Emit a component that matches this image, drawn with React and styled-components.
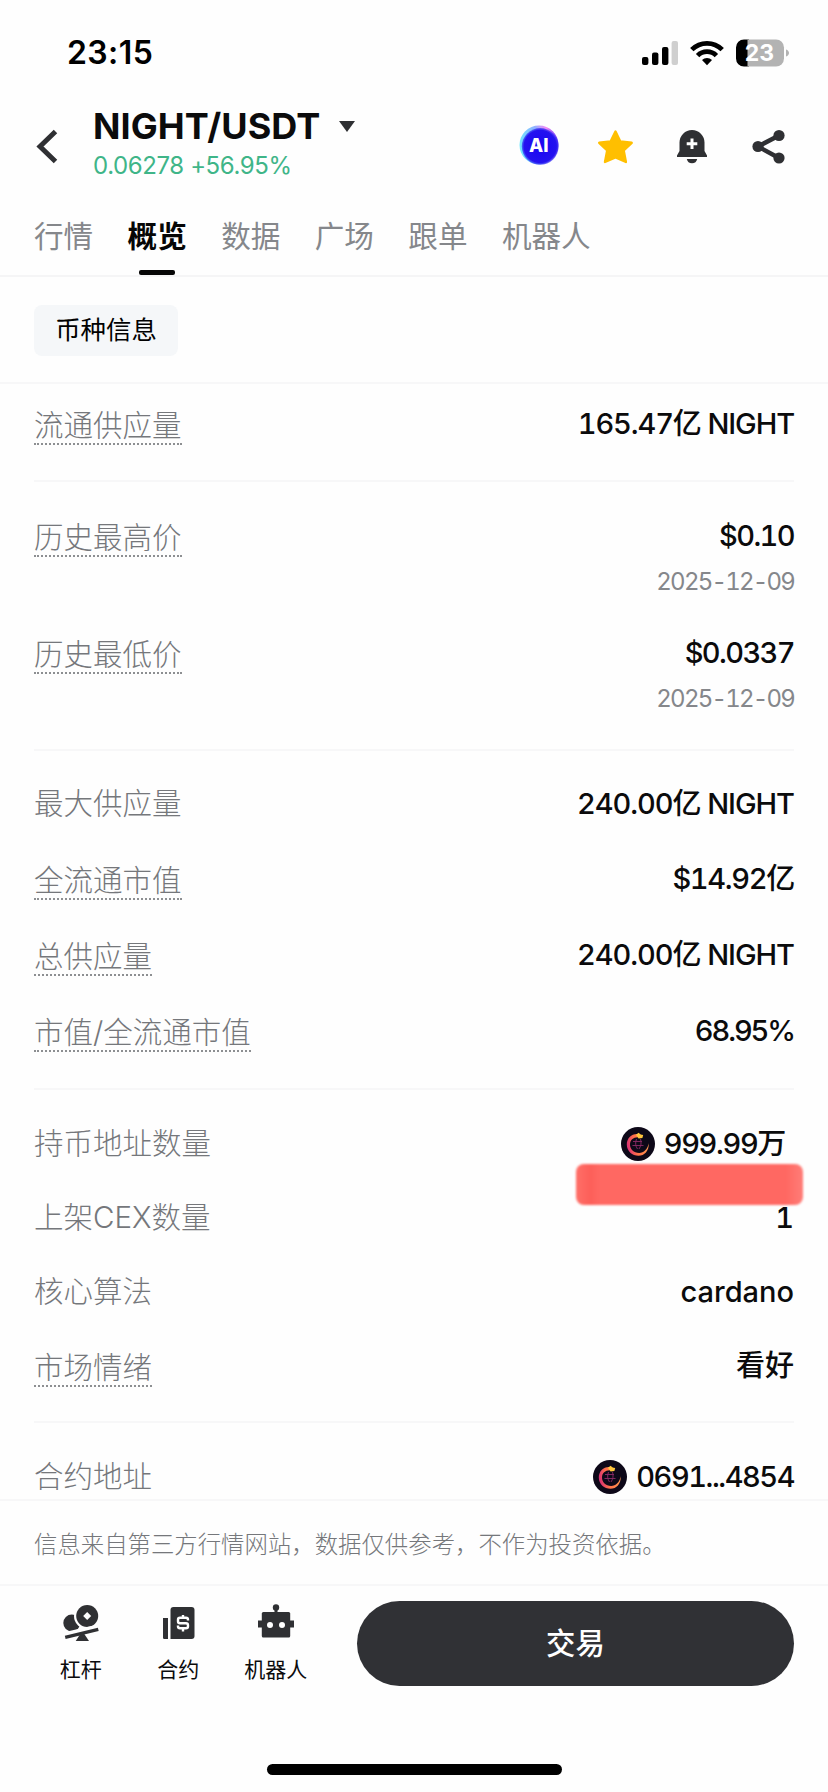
import React from 'react'
import styled, { createGlobalStyle } from 'styled-components'

const GlobalStyle = createGlobalStyle`
  * {
    box-sizing: border-box;
  }
  body {
    margin: 0;
    background: #fefefe;
    color: #0b0b0c;
    font-family: Inter, "Noto Sans CJK SC", sans-serif;
  }
  svg {
    display: block;
  }
`

const Screen = styled.div`
  width: 828px;
  height: 1792px;
  display: flex;
  flex-direction: column;
  overflow: hidden;
`

const StatusBar = styled.div`
  display: flex;
  justify-content: space-between;
  height: 104px;
  padding: 33px 38px 0 67px;
`

const Time = styled.span`
  font-size: 32px;
  line-height: 39px;
  font-weight: 600;
  letter-spacing: 0.4px;
  color: #000;
`

const StatusIcons = styled.div`
  display: flex;
  align-items: center;
  gap: 12px;
  height: 40px;
`

const Header = styled.header`
  display: flex;
  height: 84px;
  padding: 0 40px 0 34px;
`

const BackButton = styled.div`
  padding-top: 24px;
  width: 59px;
`

const Pair = styled.div`
  flex: 1;
`

const PairName = styled.div`
  display: flex;
  align-items: center;
  font-size: 36px;
  line-height: 45px;
  font-weight: 700;
  letter-spacing: 0.1px;

  svg {
    margin-left: 19px;
  }
`

const Price = styled.div`
  font-size: 24px;
  line-height: 30px;
  padding-top: 2px;
  letter-spacing: -0.4px;
  color: #3fb588;
`

const Actions = styled.div`
  display: flex;
  gap: 36.4px;
  padding-top: 21px;
`

const Tabs = styled.nav`
  display: flex;
  gap: 34.4px;
  height: 89px;
  padding: 26px 34px 0;
  border-bottom: 2px solid #f5f5f6;
`

const Tab = styled.div`
  display: flex;
  flex-direction: column;
  justify-content: space-between;
  align-items: center;
  font-size: 29.6px;
  line-height: 44px;
  font-weight: ${props => props.$active ? 700 : 400};
  color: ${props => props.$active ? '#060606' : '#85878b'};

  &::after {
    content: '';
    width: 36px;
    height: 5px;
    border-radius: 2px;
    background: ${props => props.$active ? '#060606' : 'transparent'};
  }
`

const ChipBar = styled.div`
  height: 107px;
  padding: 28px 34px 0;
  border-bottom: 2px solid #f7f7f8;
`

const Chip = styled.div`
  width: 144px;
  height: 51px;
  border-radius: 8px;
  background: #f5f7f9;
  font-size: 25.4px;
  line-height: 50px;
  font-weight: 400;
  color: #000;
  text-align: center;
`

const Section = styled.section`
  height: ${props => props.$height}px;
  margin: 0 34px;
  padding-top: ${props => props.$top}px;
  border-bottom: ${props => props.$last ? 'none' : '2px solid #f7f7f8'};
`

const Row = styled.div`
  position: relative;
  display: flex;
  justify-content: space-between;
  align-items: flex-start;
  height: ${props => props.$height}px;
`

const Label = styled.div`
  height: 38px;
  font-size: 29.5px;
  line-height: 36px;
  font-weight: 300;
  color: #75777b;
  border-bottom: ${props => props.$hint ? '2px dotted #8d8f92' : 'none'};
`

const Value = styled.div`
  display: flex;
  align-items: center;
  justify-content: flex-end;
  margin-top: ${props => props.$lift ? -2 : 0}px;
  padding-right: ${props => props.$inset || 0}px;
  font-size: 29px;
  line-height: 38px;
  font-weight: 500;
  letter-spacing: ${props => props.$tracking}px;
  font-feature-settings: "tnum";

  svg {
    margin-right: 9px;
  }
`

const DateText = styled.div`
  margin-top: 8px;
  font-size: 24px;
  line-height: 38px;
  letter-spacing: -1.8px;
  text-align: right;
  color: #85878b;
  font-feature-settings: "tnum";
`

const Marker = styled.div`
  position: absolute;
  top: 39px;
  right: -9px;
  width: 227px;
  height: 41px;
  border-radius: 8px;
  background: linear-gradient(90deg, #ff6f68 0, #fd5f59 14px, #ff6862 24px, #ff6862 210px, #ff7d78 227px);
  filter: blur(1px);
`

const Notice = styled.div`
  height: 85px;
  padding: 26px 34px 0;
  border-top: 2px solid #f7f7f8;
  font-size: 23.4px;
  line-height: 36px;
  font-weight: 300;
  color: #75777b;
`

const BottomBar = styled.footer`
  display: flex;
  flex: 1;
  padding: 15px 34px 0 32px;
  border-top: 2px solid #f7f7f8;
`

const NavItem = styled.div`
  display: flex;
  flex-direction: column;
  align-items: center;
  width: 97.5px;
  padding-top: 2px;
  font-size: 21px;
  line-height: 30px;

  svg {
    margin-bottom: 14px;
  }
`

const TradeButton = styled.div`
  width: 437px;
  height: 85px;
  margin-left: auto;
  border-radius: 43px;
  background: #303135;
  color: #fff;
  font-size: 29.4px;
  line-height: 85px;
  font-weight: 500;
  text-align: center;
`

const HomeIndicator = styled.div`
  width: 295px;
  height: 11px;
  margin: 0 auto 17px;
  border-radius: 6px;
  background: #000;
`

const Signal = () => (
  <svg width="36" height="26" viewBox="0 0 36 26">
    <rect x="0" y="17" width="6.4" height="8" rx="2" />
    <rect x="10" y="12.5" width="6.4" height="12.5" rx="2" />
    <rect x="20" y="7" width="6.4" height="18" rx="2" />
    <rect x="29.6" y="1" width="6.4" height="24" rx="2" fill="#cfcfcf" />
  </svg>
)

const Wifi = () => (
  <svg width="34" height="26" viewBox="0 0 34 26">
    <g fill="none" stroke="#000" strokeWidth="4.8">
      <path d="M1.8 9.6a21.5 21.5 0 0 1 30.4 0" />
      <path d="M7.6 15.6a13.2 13.2 0 0 1 18.8 0" />
    </g>
    <path d="M17 25.3l-5-5.2a7.2 7.2 0 0 1 10 0z" />
  </svg>
)

const Battery = () => (
  <svg width="54" height="28" viewBox="0 0 54 28">
    <path d="M8 .5h5v27H8a8 8 0 0 1-8-8v-11a8 8 0 0 1 8-8z" />
    <path d="M11.5.5H40a8 8 0 0 1 8 8v11a8 8 0 0 1-8 8H11.5z" fill="#b3b3b3" />
    <path d="M50 10.5c4 1.3 4 5.7 0 7z" fill="#b3b3b3" />
    <text x="23.5" y="22" textAnchor="middle" fontSize="23" fontWeight="700" fill="#fff">23</text>
  </svg>
)

const AiBadge = () => (
  <svg width="40" height="40" viewBox="0 0 40 40">
    <defs>
      <linearGradient id="aiRim" x1="0" y1="0.5" x2="1" y2="0.3">
        <stop offset="0" stopColor="#6fe6ff" />
        <stop offset="0.45" stopColor="#8fb4ff" />
        <stop offset="0.75" stopColor="#f58af5" />
        <stop offset="1" stopColor="#5a30ff" />
      </linearGradient>
      <radialGradient id="aiCore" cx="0.5" cy="0.5" r="0.5">
        <stop offset="0" stopColor="#1a05f2" />
        <stop offset="0.88" stopColor="#2412f0" />
        <stop offset="1" stopColor="#2a2cf4" stopOpacity="0.6" />
      </radialGradient>
    </defs>
    <circle cx="20" cy="20" r="19.5" fill="url(#aiRim)" />
    <circle cx="21.2" cy="21.4" r="18.4" fill="url(#aiCore)" />
    <text x="19.8" y="26.8" textAnchor="middle" fontSize="18.5" fontWeight="800" fill="#fff">AI</text>
  </svg>
)

const Star = () => (
  <svg width="40" height="40" viewBox="0 0 40 40">
    <path d="M20.5 6.5l4.800 10 11.400 1.300-8 7.700 2.200 11.500-10.400-4.500L10 37l2.200-11.500-8-7.700 11.400-1.300z" fill="#ffbf00" stroke="#ffbf00" strokeWidth="2.4" strokeLinejoin="round" />
  </svg>
)

const Bell = () => (
  <svg width="40" height="40" viewBox="0 0 40 40" fill="#2f3033">
    <path d="M20 5a12.5 12.5 0 0 1 12.5 12.5V26l2.500 4.500V32H5v-1.500L7.500 26v-8.500A12.500 12.500 0 0 1 20 5z" />
    <path d="M14.800 34h10.400a5.300 5.300 0 0 1-10.400 0z" />
    <path d="M20 13.500v10.600M14.700 18.800h10.600" stroke="#fff" strokeWidth="3" />
  </svg>
)

const Share = () => (
  <svg width="40" height="40" viewBox="0 0 40 40" fill="#2f3033">
    <path d="M31 10.500L10 21.500 31 33" fill="none" stroke="#2f3033" strokeWidth="4.5" />
    <circle cx="31" cy="10.5" r="5.6" />
    <circle cx="10" cy="21.5" r="5.6" />
    <circle cx="31" cy="33" r="5.6" />
  </svg>
)

const Coin = () => (
  <svg width="34" height="34" viewBox="0 0 34 34">
    <defs>
      <linearGradient id="coinFlame" x1="0" y1="0.6" x2="1" y2="0.4">
        <stop offset="0" stopColor="#d62a78" />
        <stop offset="0.4" stopColor="#ff7048" />
        <stop offset="1" stopColor="#ff9a50" />
      </linearGradient>
    </defs>
    <circle cx="17" cy="17" r="17" fill="#0d0818" />
    <g fill="none" stroke="#8c2a66" strokeWidth="0.9">
      <path d="M12 14.500h9M11.500 18.500h11M15.500 12c-1.500 4-1 7 1 10M19.500 12c1.200 4 .5 7-1.500 10" />
    </g>
    <path d="M19.500 7.500C11.500 5.500 5.800 10.800 5.800 17.500c0 6.700 5.500 11.300 11.700 11.300 6 0 10.500-5 10.300-12.600-1.200 5.800-5 9.800-9.600 9.800-5.500 0-9.200-3.800-9.200-8.400 0-5.200 4.300-8.400 10.300-7.100z" fill="url(#coinFlame)" />
    <path d="M15 7.800l2.600-2 2 1.700 2.600.5-.8 3-3.800.5z" fill="#ffc63e" />
  </svg>
)

const Lever = () => (
  <svg width="38" height="38" viewBox="0 0 38 38" fill="#2f3033">
    <circle cx="9.8" cy="20" r="8.5" />
    <circle cx="25.2" cy="13" r="13.2" fill="#fefefe" />
    <circle cx="25.2" cy="13" r="11" />
    <path d="M25.200 9l4 4-4 4-4-4z" fill="#fefefe" />
    <path d="M1.500 32.500L36.500 24.300" fill="none" stroke="#fefefe" strokeWidth="6" />
    <path d="M3.200 34.300L36.300 26.300" stroke="#2f3033" strokeWidth="3.4" />
    <path d="M18.300 31h4l4.700 7H13.700z" />
  </svg>
)

const Contract = () => (
  <svg width="38" height="38" viewBox="0 0 38 38" fill="#2f3033">
    <path d="M4 15h5v21H5.200A1.200 1.200 0 0 1 4 34.800z" />
    <path d="M14.500 4h18a3 3 0 0 1 3 3v26a3 3 0 0 1-3 3h-21V7a3 3 0 0 1 3-3z" />
    <path d="M29 17.500v-.7a2 2 0 0 0-2-2h-6a2 2 0 0 0-2 2v1.400a2 2 0 0 0 2 2h6a2 2 0 0 1 2 2v1a2 2 0 0 1-2 2h-6a2 2 0 0 1-2-2v-.7M24 12v2.800M24 25.200V28.500" fill="none" stroke="#fff" strokeWidth="2.4" />
  </svg>
)

const Robot = () => (
  <svg width="38" height="38" viewBox="0 0 38 38" fill="#2f3033">
    <circle cx="19" cy="4.5" r="3.2" />
    <path d="M17.500 6h3v5h-3zM1 17.500h5v7H1zM32 17.500h5v7h-5z" />
    <rect x="4.8" y="9" width="28.4" height="25.5" rx="1.5" />
    <circle cx="13" cy="22" r="3" fill="#fff" />
    <circle cx="25" cy="22" r="3" fill="#fff" />
  </svg>
)

const tabs = ['行情', '概览', '数据', '广场', '跟单', '机器人']

const sections = [
  {
    height: 98,
    top: 23,
    rows: [{ label: '流通供应量', value: '165.47亿 NIGHT', tracking: -1.1, hint: true, height: 58 }],
  },
  {
    height: 269,
    top: 37,
    rows: [
      { label: '历史最高价', value: '$0.10', tracking: -1.6, date: '2025-12-09', hint: true, height: 117 },
      { label: '历史最低价', value: '$0.0337', tracking: -1.6, date: '2025-12-09', hint: true, height: 112 },
    ],
  },
  {
    height: 339,
    top: 34,
    rows: [
      { label: '最大供应量', value: '240.00亿 NIGHT', tracking: -1.05, height: 77 },
      { label: '全流通市值', value: '$14.92亿', tracking: -1.3, hint: true, height: 76 },
      { label: '总供应量', value: '240.00亿 NIGHT', tracking: -1.05, hint: true, height: 76 },
      { label: '市值/全流通市值', value: '68.95%', tracking: -2.1, hint: true, height: 70 },
    ],
  },
  {
    height: 333,
    top: 35,
    rows: [
      { label: '持币地址数量', value: '999.99万', tracking: -1.35, coin: true, marked: true, inset: 9, height: 74 },
      { label: '上架CEX数量', value: '1', height: 74 },
      { label: '核心算法', value: 'cardano', height: 76 },
      { label: '市场情绪', value: '看好', hint: true, height: 70 },
    ],
  },
  {
    height: 76,
    top: 35,
    last: true,
    rows: [{ label: '合约地址', value: '0691...4854', tracking: -1.45, coin: true, height: 40 }],
  },
]

const InfoRow = ({ label, value, tracking = 0, date, hint, coin, marked, inset, height }) => (
  <Row $height={height}>
    <Label $hint={hint}>{label}</Label>
    <div>
      <Value $lift={hint} $inset={inset} $tracking={tracking}>
        {coin && <Coin />}
        {value}
      </Value>
      {date && <DateText>{date}</DateText>}
    </div>
    {marked && <Marker />}
  </Row>
)

const App = () => (
  <>
    <GlobalStyle />
    <Screen>
      <StatusBar>
        <Time>23:15</Time>
        <StatusIcons>
          <Signal />
          <Wifi />
          <Battery />
        </StatusIcons>
      </StatusBar>
      <Header>
        <BackButton>
          <svg width="26" height="38" viewBox="0 0 26 38">
            <path d="M21.500 3.500L6 18.500l15.500 15" fill="none" stroke="#2f3033" strokeWidth="5" />
          </svg>
        </BackButton>
        <Pair>
          <PairName>
            NIGHT/USDT
            <svg width="16" height="11" viewBox="0 0 16 11">
              <path d="M0 0h16L8 11z" fill="#2f3033" />
            </svg>
          </PairName>
          <Price>0.06278 +56.95%</Price>
        </Pair>
        <Actions>
          <AiBadge />
          <Star />
          <Bell />
          <Share />
        </Actions>
      </Header>
      <Tabs>
        {tabs.map(tab => <Tab key={tab} $active={tab === '概览'}>{tab}</Tab>)}
      </Tabs>
      <ChipBar>
        <Chip>币种信息</Chip>
      </ChipBar>
      {sections.map(({ rows, height, top, last }) => (
        <Section key={rows[0].label} $height={height} $top={top} $last={last}>
          {rows.map(row => <InfoRow key={row.label} {...row} />)}
        </Section>
      ))}
      <Notice>信息来自第三方行情网站，数据仅供参考，不作为投资依据。</Notice>
      <BottomBar>
        <NavItem><Lever />杠杆</NavItem>
        <NavItem><Contract />合约</NavItem>
        <NavItem><Robot />机器人</NavItem>
        <TradeButton>交易</TradeButton>
      </BottomBar>
      <HomeIndicator />
    </Screen>
  </>
)

export default App
